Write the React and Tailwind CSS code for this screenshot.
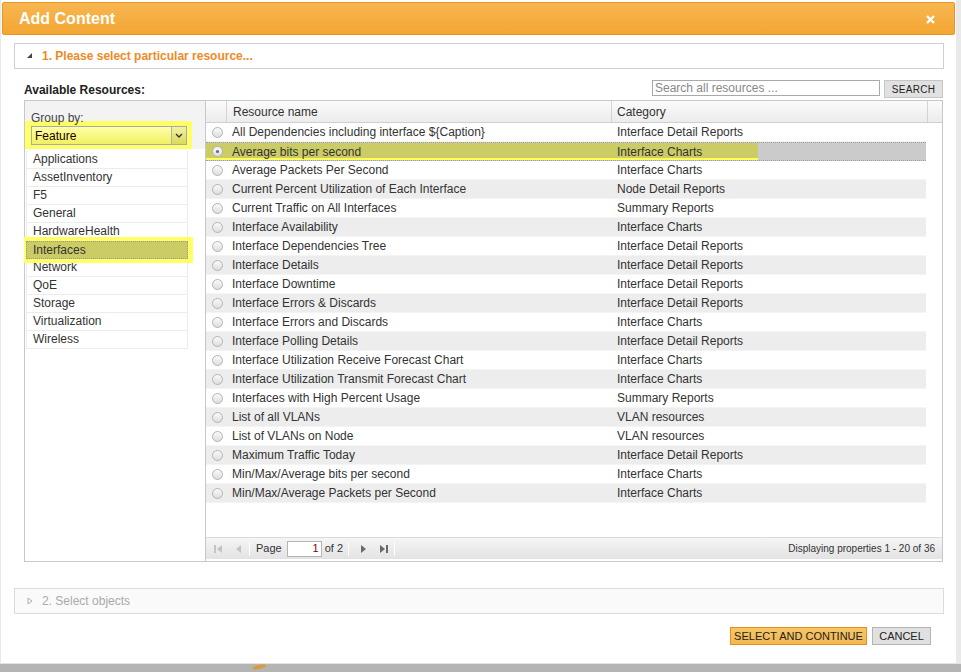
import React from 'react';

const groups = [
  'Applications',
  'AssetInventory',
  'F5',
  'General',
  'HardwareHealth',
  'Interfaces',
  'Network',
  'QoE',
  'Storage',
  'Virtualization',
  'Wireless'
];

const resources = [
  ['All Dependencies including interface ${Caption}', 'Interface Detail Reports'],
  ['Average bits per second', 'Interface Charts'],
  ['Average Packets Per Second', 'Interface Charts'],
  ['Current Percent Utilization of Each Interface', 'Node Detail Reports'],
  ['Current Traffic on All Interfaces', 'Summary Reports'],
  ['Interface Availability', 'Interface Charts'],
  ['Interface Dependencies Tree', 'Interface Detail Reports'],
  ['Interface Details', 'Interface Detail Reports'],
  ['Interface Downtime', 'Interface Detail Reports'],
  ['Interface Errors & Discards', 'Interface Detail Reports'],
  ['Interface Errors and Discards', 'Interface Charts'],
  ['Interface Polling Details', 'Interface Detail Reports'],
  ['Interface Utilization Receive Forecast Chart', 'Interface Charts'],
  ['Interface Utilization Transmit Forecast Chart', 'Interface Charts'],
  ['Interfaces with High Percent Usage', 'Summary Reports'],
  ['List of all VLANs', 'VLAN resources'],
  ['List of VLANs on Node', 'VLAN resources'],
  ['Maximum Traffic Today', 'Interface Detail Reports'],
  ['Min/Max/Average bits per second', 'Interface Charts'],
  ['Min/Max/Average Packets per Second', 'Interface Charts']
];

const SELECTED_ROW = 1;
const SELECTED_GROUP = 'Interfaces';

const Radio = ({ checked }) => (
  <span className="relative block w-[11px] h-[11px] rounded-full border border-[#b4b4b4] bg-linear-to-b from-[#fafafa] to-[#dedede]">
    {checked && <span className="absolute left-[3px] top-[3px] w-[3px] h-[3px] rounded-full bg-[#666]" />}
  </span>
);

const PagerIcon = ({ type, disabled }) => {
  const fill = disabled ? '#c4c4c4' : '#6a6a6a';
  return (
    <svg width="10" height="10" viewBox="0 0 10 10">
      {type === 'first' && (
        <>
          <rect x="1" y="1" width="2" height="8" fill={fill} />
          <polygon points="9,1 9,9 4,5" fill={fill} />
        </>
      )}
      {type === 'prev' && <polygon points="7,1 7,9 2,5" fill={fill} />}
      {type === 'next' && <polygon points="3,1 3,9 8,5" fill={fill} />}
      {type === 'last' && (
        <>
          <polygon points="1,1 1,9 6,5" fill={fill} />
          <rect x="7" y="1" width="2" height="8" fill={fill} />
        </>
      )}
    </svg>
  );
};

const Sep = () => <span className="block w-px h-[14px] bg-[#d0d0d0] border-r border-white" />;

const App = () => {
  return (
    <div className="w-[961px] h-[672px] overflow-hidden bg-[#e9e9e9] font-['Liberation_Sans',Arial,sans-serif] text-[12px] text-[#333]">
      <div className="flex flex-col w-[955px] h-[663px] ml-[1px] pt-[2px] px-[1px] bg-white">
        {/* Title bar */}
        <div className="flex items-center justify-between h-[33px] px-[16px] rounded-[2px] border border-[#e8951f] bg-linear-to-b from-[#f7b650] to-[#f4a632]">
          <span className="text-white font-bold text-[16px] mt-[1px]">Add Content</span>
          <svg width="9" height="9" viewBox="0 0 9 9" className="mr-[3px] mt-[2px]">
            <path d="M1 1 L8 8 M8 1 L1 8" stroke="#fff" strokeWidth="2.4" />
          </svg>
        </div>

        <div className="pl-[12px] pr-[11px]">
          {/* Step 1 */}
          <div className="mt-[8px] h-[26px] flex items-center border border-[#cfcfcf] bg-white">
            <svg width="6" height="6" viewBox="0 0 6 6" className="ml-[12px] mr-[9px]">
              <polygon points="5,0 5,5 0,5" fill="#444" />
            </svg>
            <span className="font-bold text-[#ee8b26]">1. Please select particular resource...</span>
          </div>

          {/* Available resources + search */}
          <div className="flex justify-between items-start pl-[10px] pt-[11px] h-[31px]">
            <span className="font-bold text-[12px] mt-[1px] text-[#222]">Available Resources:</span>
            <div className="flex items-start gap-[4px] mr-[1px]">
              <input
                className="w-[228px] h-[16px] px-[2px] border border-[#a9a9a9] text-[12px] leading-[14px] outline-none placeholder:text-[#888]"
                placeholder="Search all resources ..."
              />
              <button className="w-[59px] h-[18px] border border-[#c6c6c6] bg-[#e1e1e1] text-[10px] tracking-[0.3px] text-[#222]">
                SEARCH
              </button>
            </div>
          </div>

          {/* Main panel */}
          <div className="ml-[10px] mr-[1px] h-[462px] flex border border-[#c8c8c8]">
            {/* Group by */}
            <div className="w-[181px] flex flex-col border-r border-[#c8c8c8]">
              <div className="bg-[#f3f3f3]">
                <div className="pl-[6px] pt-[10px] h-[20px] leading-[14px] text-[#444]">Group by:</div>
                <div className="mr-[13px] pl-[6px] pr-[5px] pt-[5px] pb-[4px] bg-[#ffff66]">
                  <div className="h-[19px] flex items-center justify-between border border-[#a9a9a9] bg-linear-to-b from-[#ffffa6] to-[#f0f060]">
                    <span className="pl-[3px] text-[#220000]">Feature</span>
                    <span className="w-[15px] h-[17px] flex items-center justify-center border-l border-[#b0b0b0] bg-linear-to-b from-[#f2f2a0] to-[#dada5c]">
                      <svg width="8" height="5" viewBox="0 0 8 5">
                        <path d="M1 1 L4 4 L7 1" stroke="#333" strokeWidth="1.4" fill="none" />
                      </svg>
                    </span>
                  </div>
                </div>
              </div>
              <div className="pt-[2px] pl-[1px]">
                {groups.map((g) =>
                  g === SELECTED_GROUP ? (
                    <div key={g} className="relative w-[162px] h-[18px]">
                      <span className="absolute -left-[2px] -right-[5px] -top-[4px] -bottom-[4px] bg-[#ffff66]" />
                      <div className="relative h-[18px] pl-[6px] leading-[16px] bg-[#cccc66] border border-dotted border-[#999]">
                        {g}
                      </div>
                    </div>
                  ) : (
                    <div key={g} className="w-[162px] h-[18px] pl-[6px] leading-[17px] border border-t-0 border-[#ececec]">
                      {g}
                    </div>
                  )
                )}
              </div>
            </div>

            {/* Resource grid */}
            <div className="flex-1 flex flex-col bg-white">
              <div className="flex h-[22px] border-b border-[#cfcfcf] bg-linear-to-b from-[#fbfbfb] to-[#ececec]">
                <div className="w-[21px] border-r border-[#d3d3d3]" />
                <div className="w-[385px] pl-[6px] leading-[22px] border-r border-[#d3d3d3]">Resource name</div>
                <div className="w-[316px] pl-[5px] leading-[22px] border-r border-[#d3d3d3]">Category</div>
                <div className="flex-1" />
              </div>
              <div className="flex-1">
                {resources.map(([name, cat], i) => {
                  const selected = i === SELECTED_ROW;
                  const bg = selected ? 'bg-[#cbcbcb] border-y border-dotted border-[#a0a0a0]' : i % 2 === 0 ? 'bg-white border-b border-[#f4f4f4]' : 'bg-[#ededed] border-b border-[#f4f4f4]';
                  return (
                    <div key={name} className={`relative flex items-center h-[19px] w-[720px] ${bg}`}>
                      {selected && <span className="absolute left-0 top-0 bottom-0 w-[552px] bg-[#cccc66] border-b-2 border-[#ffff55]" />}
                      <div className="relative w-[21px] flex justify-center pl-[1px]">
                        <Radio checked={selected} />
                      </div>
                      <div className="relative w-[385px] pl-[5px] truncate">{name}</div>
                      <div className="relative pl-[5px]">{cat}</div>
                    </div>
                  );
                })}
              </div>
              <div className="flex items-center h-[22px] mb-[2px] border-t border-[#dcdcdc] bg-linear-to-b from-[#f5f5f5] to-[#e3e3e3] text-[11px]">
                <div className="flex items-center gap-[11px] pl-[7px]">
                  <PagerIcon type="first" disabled />
                  <PagerIcon type="prev" disabled />
                </div>
                <div className="ml-[5px]"><Sep /></div>
                <span className="ml-[6px] text-[#333]">Page</span>
                <input
                  className="ml-[5px] w-[35px] h-[16px] pr-[2px] border border-[#b5b5b5] bg-white text-right text-[11px] text-[#800] outline-none"
                  defaultValue="1"
                />
                <span className="ml-[3px]">of 2</span>
                <div className="ml-[5px]"><Sep /></div>
                <div className="flex items-center gap-[11px] ml-[9px]">
                  <PagerIcon type="next" />
                  <PagerIcon type="last" />
                </div>
                <div className="ml-[5px]"><Sep /></div>
                <span className="ml-auto mr-[7px] text-[10px] text-[#333]">Displaying properties 1 - 20 of 36</span>
              </div>
            </div>
          </div>

          {/* Step 2 */}
          <div className="mt-[26px] h-[26px] flex items-center border border-[#dcdcdc] bg-[#fafafa]">
            <svg width="6" height="8" viewBox="0 0 6 8" className="ml-[12px] mr-[9px]">
              <polygon points="1,1 5,4 1,7" fill="none" stroke="#b0b0b0" strokeWidth="1" />
            </svg>
            <span className="text-[#aaa]">2. Select objects</span>
          </div>

          {/* Buttons */}
          <div className="flex justify-end gap-[5px] mt-[13px] mr-[13px]">
            <button className="w-[137px] h-[18px] border border-[#e4901c] bg-linear-to-b from-[#f6c666] to-[#f2b850] text-[11px] text-[#222]">
              SELECT AND CONTINUE
            </button>
            <button className="w-[59px] h-[18px] border border-[#b4b4b4] bg-[#e0e0e0] text-[11px] text-[#222]">
              CANCEL
            </button>
          </div>
        </div>
      </div>
      <div className="h-px bg-[#e3e3e3]" />
      <div className="relative h-[8px] bg-[#b4b4b4]">
        <span className="absolute left-[252px] top-[1px] w-[14px] h-[4px] rounded-[50%] bg-[#d99a3c] -rotate-12" />
      </div>
    </div>
  );
};

export default App;
